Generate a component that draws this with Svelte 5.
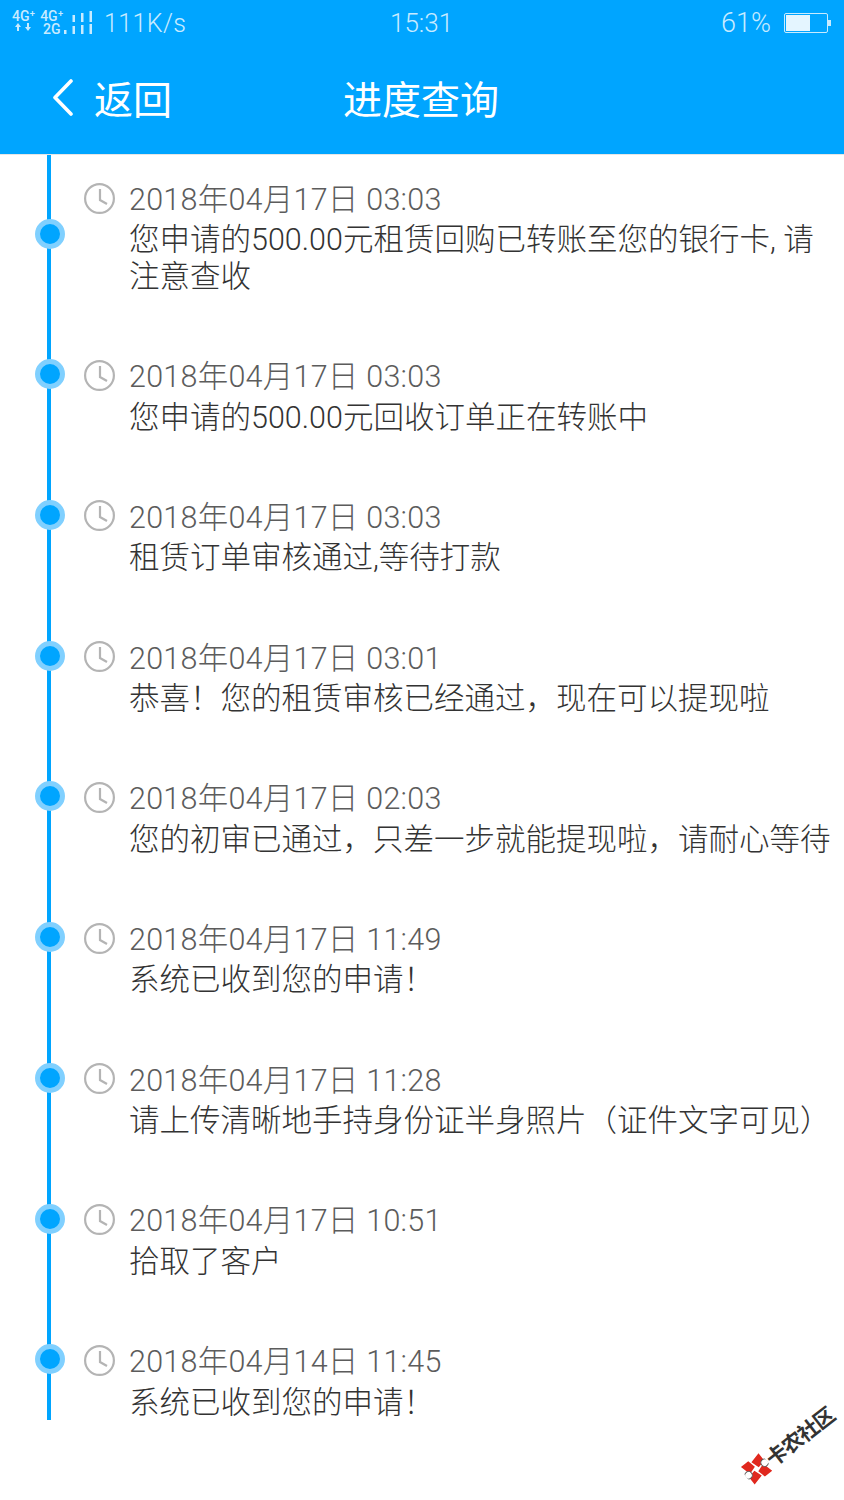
<script>
	const records = [
		{ time: '2018年04月17日 03:03', text: '您申请的500.00元租赁回购已转账至您的银行卡, 请注意查收' },
		{ time: '2018年04月17日 03:03', text: '您申请的500.00元回收订单正在转账中' },
		{ time: '2018年04月17日 03:03', text: '租赁订单审核通过,等待打款' },
		{ time: '2018年04月17日 03:01', text: '恭喜！您的租赁审核已经通过，现在可以提现啦' },
		{ time: '2018年04月17日 02:03', text: '您的初审已通过，只差一步就能提现啦，请耐心等待' },
		{ time: '2018年04月17日 11:49', text: '系统已收到您的申请！' },
		{ time: '2018年04月17日 11:28', text: '请上传清晰地手持身份证半身照片（证件文字可见）' },
		{ time: '2018年04月17日 10:51', text: '拾取了客户' },
		{ time: '2018年04月14日 11:45', text: '系统已收到您的申请！' }
	];
</script>

<div class="page">
	<header class="header">
		<div class="status">
			<div class="status-left">
				<div class="net">
					<span class="net-col">
						<span>4G⁺</span>
						<svg width="20" height="8" viewBox="0 0 20 8" fill="#c8ebff">
							<path d="M4 0l3 4H5v4H3V4H1zM14 8l-3-4h2V0h2v4h2z" />
						</svg>
					</span>
					<span class="net-col">
						<span>4G⁺</span>
						<span>2G</span>
					</span>
				</div>
				<svg class="bars" width="29" height="24" viewBox="0 0 29 24" fill="#c8ebff">
					<rect x="0" y="19" width="2.5" height="4" />
					<rect x="8.5" y="4" width="2.5" height="7" />
					<rect x="8.5" y="15" width="2.5" height="8" />
					<rect x="17" y="2" width="2.5" height="9" />
					<rect x="17" y="14" width="2.5" height="9" />
					<rect x="25.5" y="0" width="2.5" height="11" />
					<rect x="25.5" y="13" width="2.5" height="10" />
				</svg>
				<span class="speed">111K/s</span>
			</div>
			<span class="clock-time">15:31</span>
			<div class="status-right">
				<span class="battery-pct">61%</span>
				<div class="battery"><div class="battery-fill" style="width: 61%"></div></div>
				<div class="battery-tip"></div>
			</div>
		</div>
		<nav class="nav">
			<div class="back">
				<svg class="chevron" width="24" height="38" viewBox="0 0 24 38" fill="none" stroke="#fff" stroke-width="3.6" stroke-linecap="round" stroke-linejoin="round">
					<path d="M20 2 L4 18.5 L20 35" />
				</svg>
				<span>返回</span>
			</div>
			<h1>进度查询</h1>
		</nav>
	</header>

	<div class="content">
		<div class="rail">
			{#each records as _}
				<span class="dot"></span>
			{/each}
		</div>
		<ul class="list">
			{#each records as r}
				<li class="row">
					<svg class="clock" width="32" height="32" viewBox="0 0 32 32" fill="none" stroke="#b4b4b4" stroke-width="2.2">
						<circle cx="15.5" cy="15.5" r="14.4" />
						<path d="M16 6v11l7 4" />
					</svg>
					<div class="body">
						<div class="time">{r.time}</div>
						<div class="text">{r.text}</div>
					</div>
				</li>
			{/each}
		</ul>
	</div>

	<div class="watermark">
		<svg width="26" height="26" viewBox="0 0 28 28">
			<path d="M2 2h10l2 9-9 3zM26 2v10l-9 2-3-9zM2 26V16l9-2 3 9zM26 26H16l-2-9 9-3z" fill="#e0281e" />
			<circle cx="3" cy="14" r="4" fill="#fff" stroke="#555" stroke-width="1" />
			<circle cx="25" cy="14" r="4" fill="#fff" stroke="#555" stroke-width="1" />
		</svg>
		<span>卡农社区</span>
	</div>
</div>

<style>
	:global(body) {
		margin: 0;
		background: #fff;
	}

	.page {
		position: relative;
		height: 1500px;
		overflow: hidden;
		font-family: Roboto, 'Noto Sans CJK SC', sans-serif;
	}

	.header {
		height: 154px;
		background: #00a5ff;
		border-bottom: 1px solid #e6e6e6;
		display: flex;
		flex-direction: column;
	}

	.status {
		height: 46px;
		position: relative;
		display: flex;
		justify-content: space-between;
		align-items: center;
		padding: 0 13px 0 12px;
		color: #c8ebff;
	}

	.status-left {
		display: flex;
		align-items: center;
	}

	.net {
		display: flex;
		gap: 5px;
		width: 52px;
		flex-shrink: 0;
		font-size: 14px;
		font-weight: 500;
		line-height: 13px;
		white-space: nowrap;
	}

	.net-col {
		display: flex;
		flex-direction: column;
		align-items: center;
	}

	.bars {
		margin-right: 11px;
	}

	.speed {
		font-size: 25px;
		font-weight: 300;
		letter-spacing: 0.4px;
	}

	.clock-time {
		position: absolute;
		left: 390px;
		font-size: 26px;
		font-weight: 300;
	}

	.status-right {
		display: flex;
		align-items: center;
	}

	.battery-pct {
		font-size: 27px;
		font-weight: 300;
		margin-right: 13px;
	}

	.battery {
		box-sizing: border-box;
		width: 44px;
		height: 20px;
		border: 1.5px solid #c8ebff;
		border-radius: 2px;
		padding: 1px;
	}

	.battery-fill {
		height: 100%;
		background: #e4f5ff;
	}

	.battery-tip {
		width: 3px;
		height: 6px;
		background: #c8ebff;
	}

	.nav {
		flex: 1;
		position: relative;
		display: flex;
		align-items: center;
		padding: 0 0 6px 51px;
		color: #fff;
		font-size: 39px;
	}

	.back {
		display: flex;
		align-items: center;
		gap: 19px;
	}

	.chevron {
		margin-top: 2px;
	}

	.nav h1 {
		position: absolute;
		left: 0;
		right: 2px;
		margin: 0;
		text-align: center;
		font-size: 39px;
		font-weight: 400;
	}

	.content {
		display: flex;
		padding-left: 35px;
	}

	.rail {
		position: relative;
		width: 31px;
		height: 1265px;
		display: flex;
		flex-direction: column;
		align-items: flex-start;
		gap: 110.7px;
		padding-top: 63.7px;
		box-sizing: border-box;
		flex-shrink: 0;
	}

	.rail::before {
		content: '';
		position: absolute;
		left: 12px;
		top: 0;
		bottom: 0;
		width: 4px;
		background: #00a5ff;
	}

	.dot {
		position: relative;
		box-sizing: border-box;
		width: 30px;
		height: 30px;
		flex-shrink: 0;
		border: 5px solid #80d0ff;
		border-radius: 50%;
		background: #00a5ff;
	}

	.list {
		flex: 1;
		min-width: 0;
		list-style: none;
		margin: 0;
		padding: 0 0 0 18px;
	}

	.row {
		display: flex;
		align-items: flex-start;
		gap: 13px;
		padding: 22px 0 36.7px;
	}

	.clock {
		flex-shrink: 0;
		margin-top: 5.5px;
	}

	.body {
		flex: 1;
		min-width: 0;
		font-size: 30.5px;
		line-height: 36.6px;
	}

	.time {
		color: #5c5c5c;
		font-weight: 300;
		line-height: 45.4px;
		letter-spacing: 0.25px;
	}

	.text {
		color: #333;
		font-weight: 300;
	}

	.watermark {
		position: absolute;
		left: 735px;
		top: 1429px;
		display: flex;
		align-items: center;
		gap: 1px;
		transform: rotate(-38deg);
		color: #333;
		font-size: 21px;
		font-weight: 700;
		letter-spacing: -1px;
		white-space: nowrap;
	}
</style>
